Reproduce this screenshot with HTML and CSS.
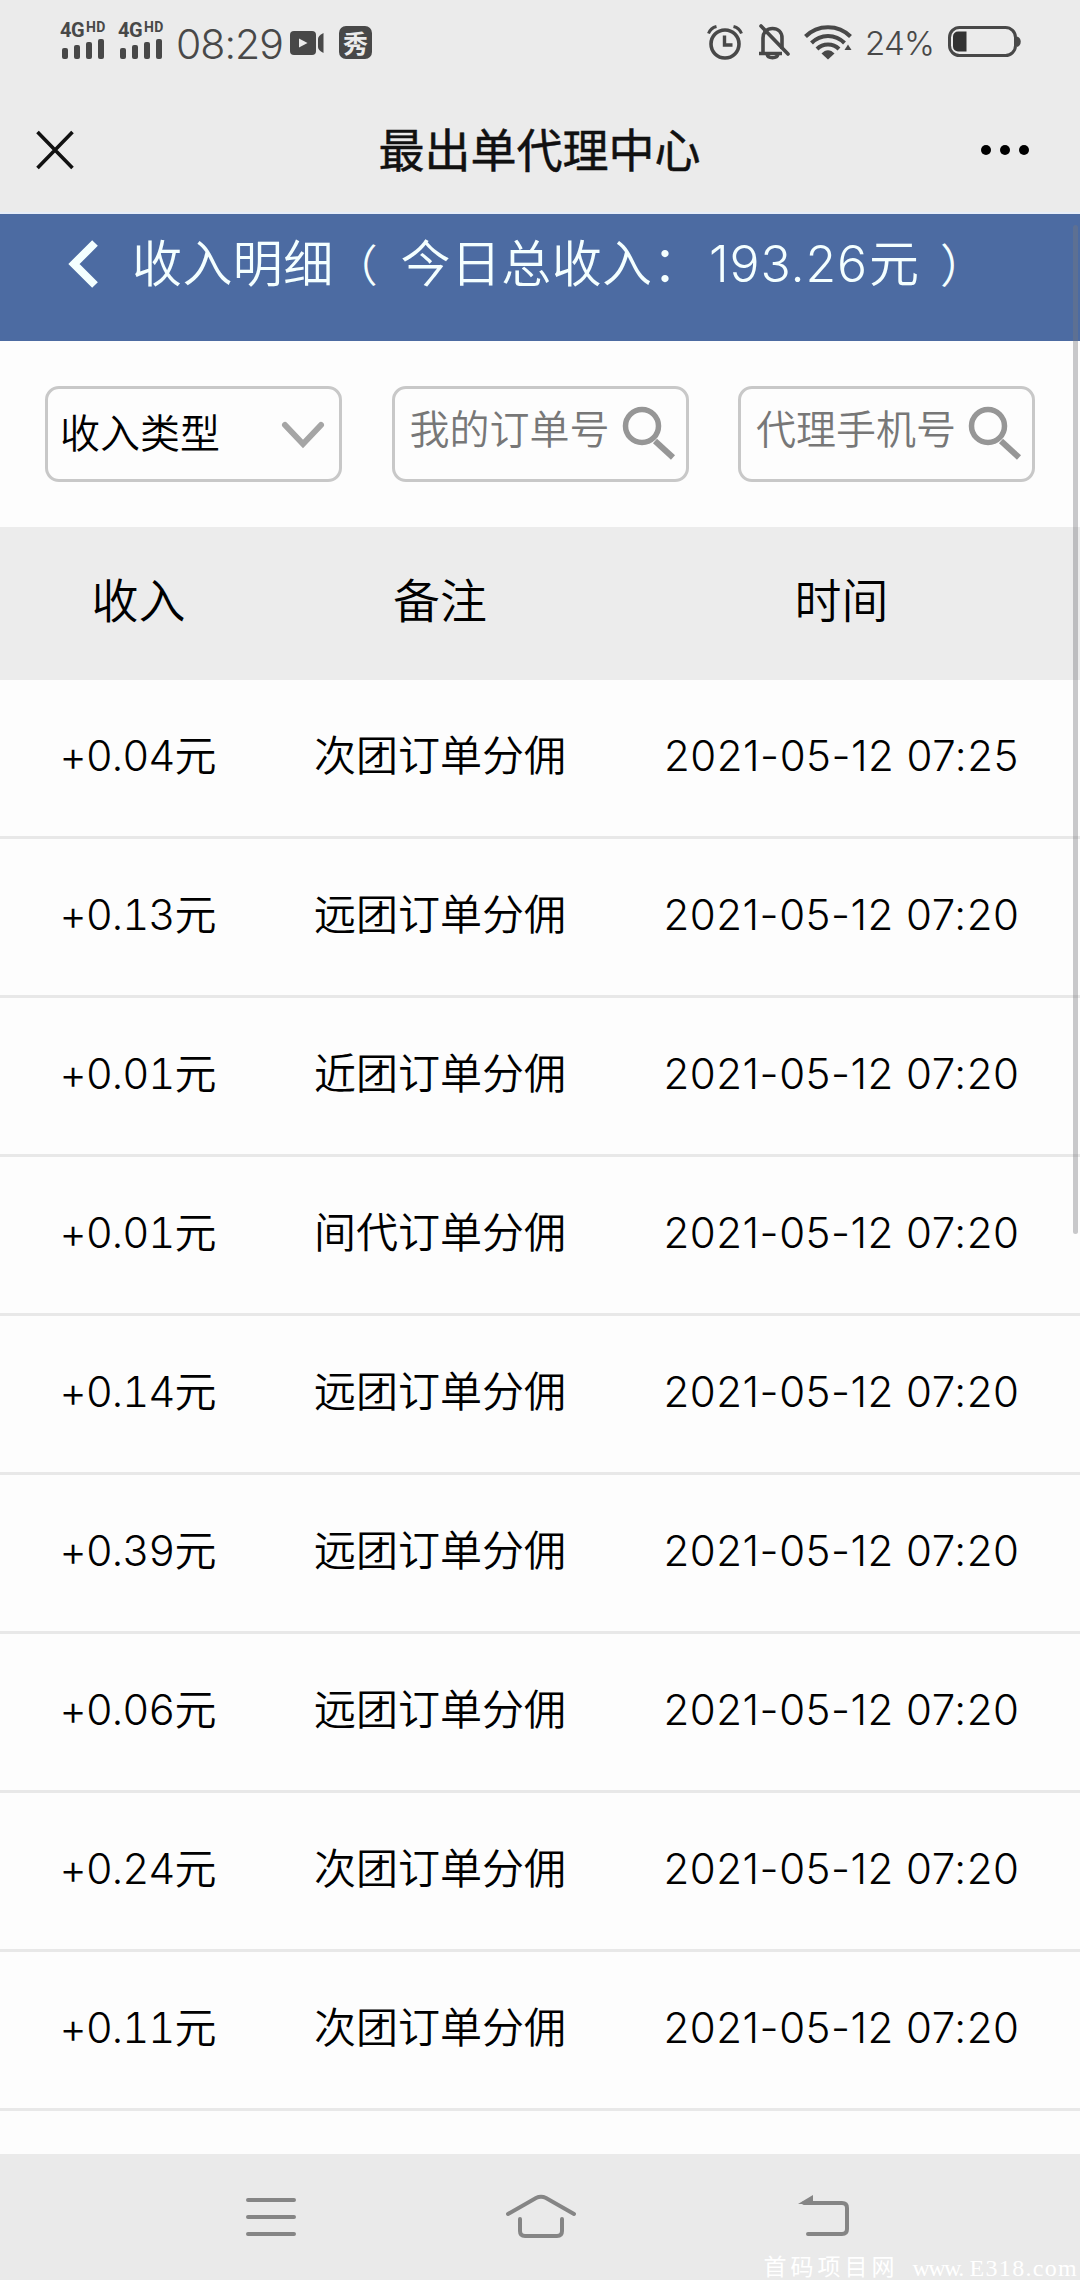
FILE: index.html
```html
<!DOCTYPE html>
<html lang="zh-CN">
<head>
    <meta charset="UTF-8">
    <meta name="viewport" content="width=device-width, initial-scale=1.0">
    <title>最出单代理中心</title>
    <link rel="stylesheet" href="styles.css">
</head>
<body>
    <div class="status-bar">
        <div class="signals">
            <div class="signal">
                <div class="net">4G<sup>HD</sup></div>
                <div class="bars"><i></i><i></i><i></i><i></i></div>
            </div>
            <div class="signal">
                <div class="net">4G<sup>HD</sup></div>
                <div class="bars"><i></i><i></i><i></i><i></i></div>
            </div>
        </div>
        <span class="clock">08:29</span>
        <svg class="camera" width="34" height="24" viewBox="0 0 34 24">
            <rect width="26" height="24" rx="4" fill="#484848"/>
            <path d="M9 7.500l8.500 4.500L9 16.500z" fill="#ebebeb"/>
            <path d="M33.500 2v20c-4-2-5.500-4-5.500-6V8c0-2 1.500-4 5.500-6z" fill="#484848"/>
        </svg>
        <span class="app-badge">秀</span>
        <div class="status-right">
            <svg width="36" height="36" viewBox="0 0 36 36" fill="none" stroke="#484848">
                <circle cx="18" cy="20" r="14" stroke-width="3.600"/>
                <path d="M17.500 11.500v9.500h8" stroke-width="3.400"/>
                <path d="M1.500 9.500C3 5.500 5.500 3.500 9.500 2.500M34.500 9.500c-1.500-4-4-6-8-7" stroke-width="3"/>
            </svg>
            <svg class="bell" width="32" height="36" viewBox="0 0 32 36" fill="none" stroke="#484848" stroke-width="3.600">
                <path d="M1 29.500h23M5 29V14c0-6 4-9.500 9.500-9.500S24 8 24 14v11"/>
                <path d="M9 30c1 5 10 5 11 0"/>
                <path d="M3 2l27 28" stroke-width="3.600" stroke-linecap="round"/>
            </svg>
            <svg class="wifi" width="48" height="36" viewBox="0 0 48 36" fill="none" stroke="#484848" stroke-width="4">
                <path d="M1.500 12.500c12-12.500 33-12.500 45 0M7.500 19c9-9.500 24-9.500 33 0M13 25c6-6 16-6 22 0"/>
                <path d="M17.500 29.500c4-4.500 9-4.500 13 0L24 35.500z" fill="#484848" stroke="none"/>
                <path d="M44 20.500l3.500 5.500h-7z" fill="#484848" stroke="none"/>
            </svg>
            <span class="percent">24%</span>
            <svg class="battery" width="73" height="32" viewBox="0 0 73 32">
                <rect x="1.500" y="1.500" width="66" height="28" rx="10" fill="none" stroke="#484848" stroke-width="3"/>
                <path d="M10 5.500h8.500v20H10a5 5 0 0 1-5-5v-10a5 5 0 0 1 5-5z" fill="#333"/>
                <path d="M69 10.500c5 1 5 9.500 0 10.500z" fill="#484848"/>
            </svg>
        </div>
    </div>

    <div class="title-bar">
        <svg class="close" width="38" height="40" viewBox="0 0 38 40" stroke="#111" stroke-width="3.600">
            <path d="M1.500 2l35 36M36.500 2l-35 36"/>
        </svg>
        <h1>最出单代理中心</h1>
        <svg class="more" width="50" height="12" viewBox="0 0 50 12" fill="#000">
            <circle cx="6" cy="6" r="5"/><circle cx="25" cy="6" r="5"/><circle cx="44" cy="6" r="5"/>
        </svg>
    </div>

    <div class="page">
        <div class="page-header">
            <svg class="back" width="32" height="50" viewBox="0 0 32 50" fill="none" stroke="#f4ffff" stroke-width="8">
                <path d="M28 4L7 25l21 21"/>
            </svg>
            <span class="heading">收入明细<span class="open">（</span> 今日总收入：<span class="total">193.26</span>元 <span class="close-paren">）</span></span>
        </div>

        <div class="filters">
            <div class="field select">
                <span>收入类型</span>
                <svg width="44" height="28" viewBox="0 0 44 28" fill="none" stroke="#a5a5a5" stroke-width="6" stroke-linecap="round">
                    <path d="M4 4l18 19L40 4"/>
                </svg>
            </div>
            <div class="field search">
                <span>我的订单号</span>
                <svg width="54" height="54" viewBox="0 0 54 54" fill="none" stroke="#969696">
                    <circle cx="20" cy="20" r="16.500" stroke-width="5.500"/>
                    <path d="M33 35l18 16.500" stroke-width="6"/>
                </svg>
            </div>
            <div class="field search">
                <span>代理手机号</span>
                <svg width="54" height="54" viewBox="0 0 54 54" fill="none" stroke="#969696">
                    <circle cx="20" cy="20" r="16.500" stroke-width="5.500"/>
                    <path d="M33 35l18 16.500" stroke-width="6"/>
                </svg>
            </div>
        </div>

        <table class="income">
            <thead>
                <tr><th class="amount">收入</th><th class="remark">备注</th><th class="time">时间</th></tr>
            </thead>
            <tbody>
                <tr><td>+0.04元</td><td>次团订单分佣</td><td>2021-05-12 07:25</td></tr>
                <tr><td>+0.13元</td><td>远团订单分佣</td><td>2021-05-12 07:20</td></tr>
                <tr><td>+0.01元</td><td>近团订单分佣</td><td>2021-05-12 07:20</td></tr>
                <tr><td>+0.01元</td><td>间代订单分佣</td><td>2021-05-12 07:20</td></tr>
                <tr><td>+0.14元</td><td>远团订单分佣</td><td>2021-05-12 07:20</td></tr>
                <tr><td>+0.39元</td><td>远团订单分佣</td><td>2021-05-12 07:20</td></tr>
                <tr><td>+0.06元</td><td>远团订单分佣</td><td>2021-05-12 07:20</td></tr>
                <tr><td>+0.24元</td><td>次团订单分佣</td><td>2021-05-12 07:20</td></tr>
                <tr><td>+0.11元</td><td>次团订单分佣</td><td>2021-05-12 07:20</td></tr>
            </tbody>
        </table>
        <div class="scrollbar"></div>
    </div>

    <div class="nav-bar">
        <svg width="52" height="50" viewBox="0 0 52 50" stroke="#858585" stroke-width="4" stroke-linecap="round">
            <path d="M3 8h46M3 25h46M3 42h46"/>
        </svg>
        <svg class="home" width="72" height="50" viewBox="0 0 72 50" fill="none" stroke="#858585" stroke-width="4" stroke-linecap="round">
            <path d="M3 22L31 6q5-2.500 10 0l28 16M15 27v12q0 5 5 5h32q5 0 5-5V27"/>
        </svg>
        <svg width="52" height="50" viewBox="0 0 52 50" fill="none" stroke="#858585" stroke-width="4">
            <path d="M6 11h38q5 0 5 5v21q0 5-5 5H10" stroke-linecap="round"/>
            <path d="M0 12L15 3v9z" fill="#858585" stroke="none"/>
        </svg>
        <span class="watermark"><span class="site">首码项目网</span><span class="www">www.</span><span class="domain">E318.com</span></span>
    </div>
</body>
</html>
```
FILE: styles.css
```css
* { box-sizing: border-box; }
body { font-family: Inter, "Noto Sans CJK SC", sans-serif; font-weight: 350; background-color: #fdfdfd; color: #000; margin: 0; height: 2280px; overflow: hidden; display: flex; flex-direction: column; }
svg { display: block; flex: none; }

.status-bar { height: 86px; flex: none; background: #ebebeb; color: #484848; display: flex; align-items: flex-start; padding: 22px 59px 0 60px; }
.signals { display: flex; gap: 12px; }
.signal { width: 46px; }
.net { font: bold 20px/16px Roboto, sans-serif; height: 16px; white-space: nowrap; letter-spacing: -0.5px; display: flex; }
.net sup { font-size: 14px; line-height: 11px; letter-spacing: 0.3px; margin-left: 2px; }
.bars { display: flex; align-items: flex-end; gap: 6px; height: 21px; padding-left: 2px; }
.bars i { width: 6px; background: #484848; border-radius: 2px; height: 11px; }
.bars i:nth-child(2) { height: 14px; }
.bars i:nth-child(3) { height: 17px; }
.bars i:nth-child(4) { height: 20px; }
.clock { font-size: 41px; line-height: 45px; margin-left: 12px; width: 109px; letter-spacing: -1px; }
.camera { margin: 9px 0 0 5px; }
.app-badge { width: 33px; height: 33px; margin: 4px 0 0 15px; border-radius: 7px; background: #484848; color: #ebebeb; font: bold 25px/32px "Noto Sans CJK SC", sans-serif; text-align: center; }
.status-right { margin-left: auto; display: flex; align-items: flex-start; padding-top: 2px; }
.bell { margin-left: 15px; }
.wifi { margin-left: 14px; }
.percent { font-size: 33px; line-height: 39px; margin-left: 13px; width: 70px; letter-spacing: -0.8px; white-space: nowrap; }
.battery { margin: 2px 0 0 13px; }

.title-bar { height: 128px; flex: none; background: #ebebeb; border-bottom: 2px solid #e6edf8; display: flex; align-items: center; justify-content: space-between; padding: 2px 50px 0 36px; }
.title-bar h1 { font-size: 46px; line-height: 60px; font-weight: 400; color: #111; -webkit-text-stroke: 0.5px #111; margin: 0 0 0 25px; }

.page { position: relative; flex: 1; overflow: hidden; }
.page-header { height: 127px; background: #4c6ba2; color: #f4ffff; display: flex; align-items: flex-start; padding: 25px 0 0 67px; }
.heading { font-size: 50px; line-height: 50px; margin-left: 33px; letter-spacing: 0.4px; word-spacing: 2px; white-space: pre; }
.open { font-size: 44px; margin-right: 6px; }
.close-paren { font-size: 46px; margin-left: 4px; }
.total { margin: 0 1px 0 6px; letter-spacing: 0.9px; }

.filters { display: flex; justify-content: space-between; padding: 45px 45px; height: 186px; }
.field { width: 297px; height: 96px; border: 3px solid #c8c8c8; border-radius: 14px; display: flex; align-items: flex-start; justify-content: space-between; font-size: 40px; line-height: 60px; padding: 15px 14px 0 12px; white-space: nowrap; }
.select svg { margin-top: 17px; }
.search { color: #777; padding: 11px 10px 0 15px; }
.search svg { margin-top: 6px; }

.income { width: 1080px; table-layout: fixed; border-collapse: separate; border-spacing: 0; line-height: 50px; }
.income .amount { width: 277px; }
.income .remark { width: 326px; }
th { height: 153px; padding: 0 0 6px; background: #ececec; font-size: 47px; font-weight: 350; text-align: center; }
td { height: 159px; padding: 0 0 4px; border-bottom: 3px solid #e8e8e8; font-size: 42px; text-align: center; white-space: nowrap; }
td:first-child { padding-right: 2px; font-variant-numeric: tabular-nums; letter-spacing: -1px; }
td:last-child { letter-spacing: 0.5px; }
.scrollbar { position: absolute; top: 11px; right: 2px; width: 5px; height: 1009px; border-radius: 3px; background: rgba(120, 120, 125, 0.4); }

.nav-bar { position: relative; height: 126px; flex: none; background: #eaeaea; display: flex; justify-content: space-between; padding: 38px 230px 0 245px; }
.home { margin-right: 14px; }
.watermark { position: absolute; right: 2px; bottom: 0; color: #fff; font: 24px/24px "Liberation Serif", "Noto Sans CJK SC", serif; white-space: pre; display: flex; }
.site { font-size: 23px; letter-spacing: 4px; margin-right: 14px; }
.www { letter-spacing: -1.6px; margin-right: 7px; }
.domain { letter-spacing: 1.3px; }
```
